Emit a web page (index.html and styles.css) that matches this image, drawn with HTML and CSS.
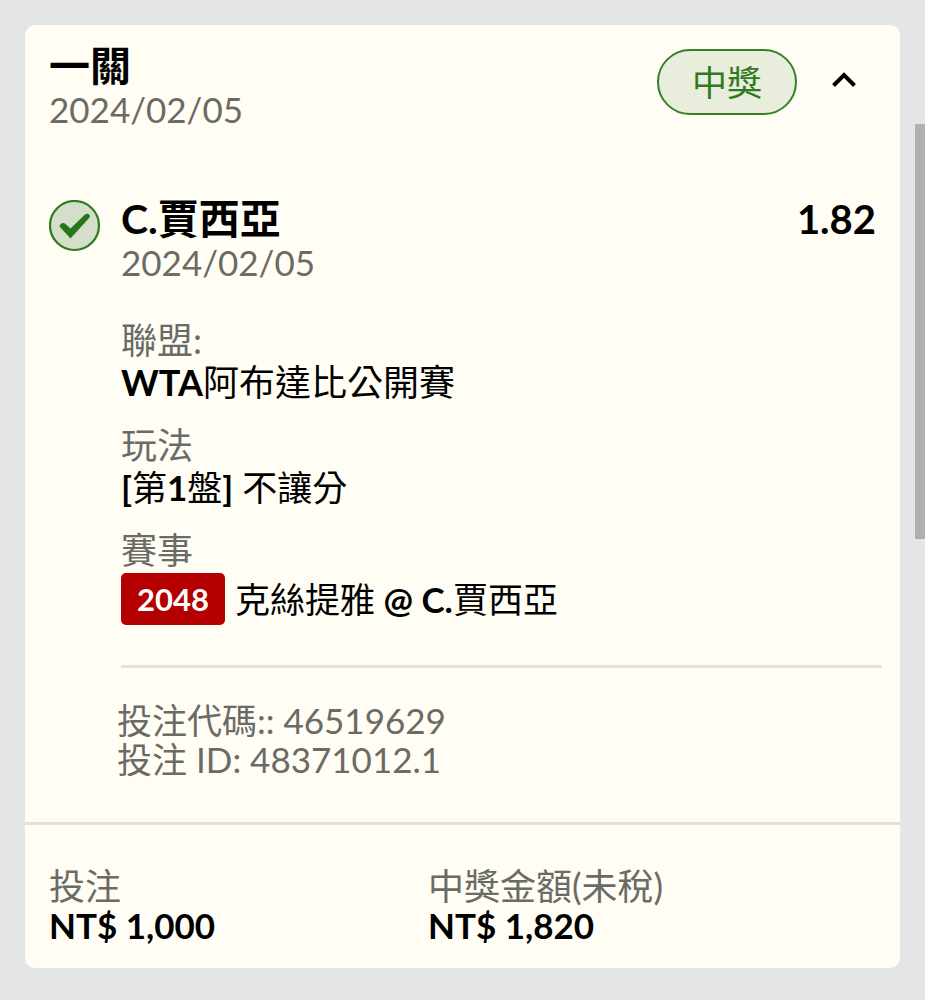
FILE: index.html
```
<!DOCTYPE html>
<html lang="zh-TW">
  <head>
    <meta charset="UTF-8" />
    <meta name="viewport" content="width=device-width, initial-scale=1.0" />
    <title>投注紀錄</title>
    <link rel="stylesheet" href="styles.css">
  </head>
  <body>
    <main class="ticket">
      <header class="ticket-header">
        <div>
          <h1 class="title">一關</h1>
          <p class="date">2024/02/05</p>
        </div>
        <div class="header-side">
          <span class="status">中獎</span>
          <button class="toggle" type="button" aria-label="收合" aria-expanded="true">
            <svg width="26" height="18" viewBox="0 0 26 18" aria-hidden="true">
              <path d="M2.5 14.5 L13 4 L23.5 14.5" fill="none" stroke="#000" stroke-width="4" />
            </svg>
          </button>
        </div>
      </header>

      <section class="leg">
        <svg class="leg-icon" width="52" height="52" viewBox="0 0 52 52" aria-hidden="true">
          <circle cx="25.5" cy="25.5" r="24.5" fill="#d3dfc9" stroke="#2e7a1e" stroke-width="2.2" />
          <path d="M10.5 26.5 Q12 21.5 16 23.5 L21.5 28.5 L36.5 14 Q40.5 12.5 41 17 L21.5 38.5 Z" fill="#27761a" />
        </svg>
        <div class="leg-body">
          <div class="leg-head">
            <h2 class="title">C.賈西亞</h2>
            <span class="odds">1.82</span>
          </div>
          <p class="date">2024/02/05</p>

          <dl class="details">
            <div>
              <dt>聯盟:</dt>
              <dd><b>WTA</b>阿布達比公開賽</dd>
            </div>
            <div>
              <dt>玩法</dt>
              <dd class="play"><b>[</b>第<b>1</b>盤<b>]</b> 不讓分</dd>
            </div>
            <div>
              <dt>賽事</dt>
              <dd class="match">
                <span class="match-no">2048</span>
                <span>克絲提雅<b> @ C.</b>賈西亞</span>
              </dd>
            </div>
          </dl>

          <div class="codes">
            <p>投注代碼:: 46519629</p>
            <p>投注 ID: 48371012.1</p>
          </div>
        </div>
      </section>

      <footer class="ticket-footer">
        <div>
          <p class="label">投注</p>
          <p class="amount">NT$ 1,000</p>
        </div>
        <div>
          <p class="label">中獎金額(未稅)</p>
          <p class="amount">NT$ 1,820</p>
        </div>
      </footer>
    </main>
    <div class="scroll-thumb"></div>
  </body>
</html>
```
FILE: styles.css
```
* {
  box-sizing: border-box;
}
body {
  margin: 0;
  padding: 25px;
  background-color: #e3e5e7;
  color: #000;
  font-family: Lato, "Noto Sans CJK TC", sans-serif;
  font-size: 36px;
  line-height: 42px;
}
h1,
h2,
p,
dl,
dd {
  margin: 0;
}
.ticket {
  background-color: #fffdf4;
  border-radius: 10px;
}
.ticket-header {
  display: flex;
  justify-content: space-between;
  padding: 20px 24px 0;
}
.title {
  font-size: 41px;
  font-weight: 700;
}
.date {
  color: #6b6b66;
  font-size: 35px;
  line-height: 44px;
}
.header-side {
  display: flex;
  align-items: center;
  align-self: flex-start;
  gap: 18px;
  padding-top: 4px;
}
.status {
  padding: 10px 33px;
  border: 2px solid #37802a;
  border-radius: 33px;
  background-color: #e9eddc;
  color: #2e7a1e;
  font-size: 35px;
}
.toggle {
  display: flex;
  padding: 14px 19px 18px 16px;
  border: none;
  background: none;
  cursor: pointer;
}
.leg {
  display: flex;
  gap: 20px;
  padding: 67px 24px 43px;
}
.leg-icon {
  flex: none;
  margin-top: 2px;
}
.leg-body {
  flex: 1;
}
.leg-head {
  display: flex;
  justify-content: space-between;
}
.odds {
  font-size: 40px;
  font-weight: 700;
}
.details {
  display: flex;
  flex-direction: column;
  gap: 21px;
  margin: 35px -6px 0 0;
  padding-bottom: 40px;
  border-bottom: 3px solid #e4e2d9;
}
.details dt,
.codes,
.label {
  color: #6b6b66;
}
.play,
.match {
  font-size: 35px;
}
.match {
  display: flex;
  align-items: center;
  gap: 10px;
  padding-top: 2px;
}
.match-no {
  padding: 5px 16px;
  border-radius: 5px;
  background-color: #b40000;
  color: #fff;
  font-size: 31px;
  font-weight: 700;
}
.codes {
  margin: 33px 0 0 -4px;
  font-size: 35px;
  line-height: 39px;
}
.ticket-footer {
  display: grid;
  grid-template-columns: 379px 1fr;
  padding: 42px 24px 23px;
  border-top: 3px solid #e2e0d8;
  line-height: 39px;
}
.amount {
  font-size: 35px;
  font-weight: 700;
}
.scroll-thumb {
  position: fixed;
  top: 124px;
  right: 0;
  width: 10px;
  height: 415px;
  background-color: #b0b0b0;
}
```
